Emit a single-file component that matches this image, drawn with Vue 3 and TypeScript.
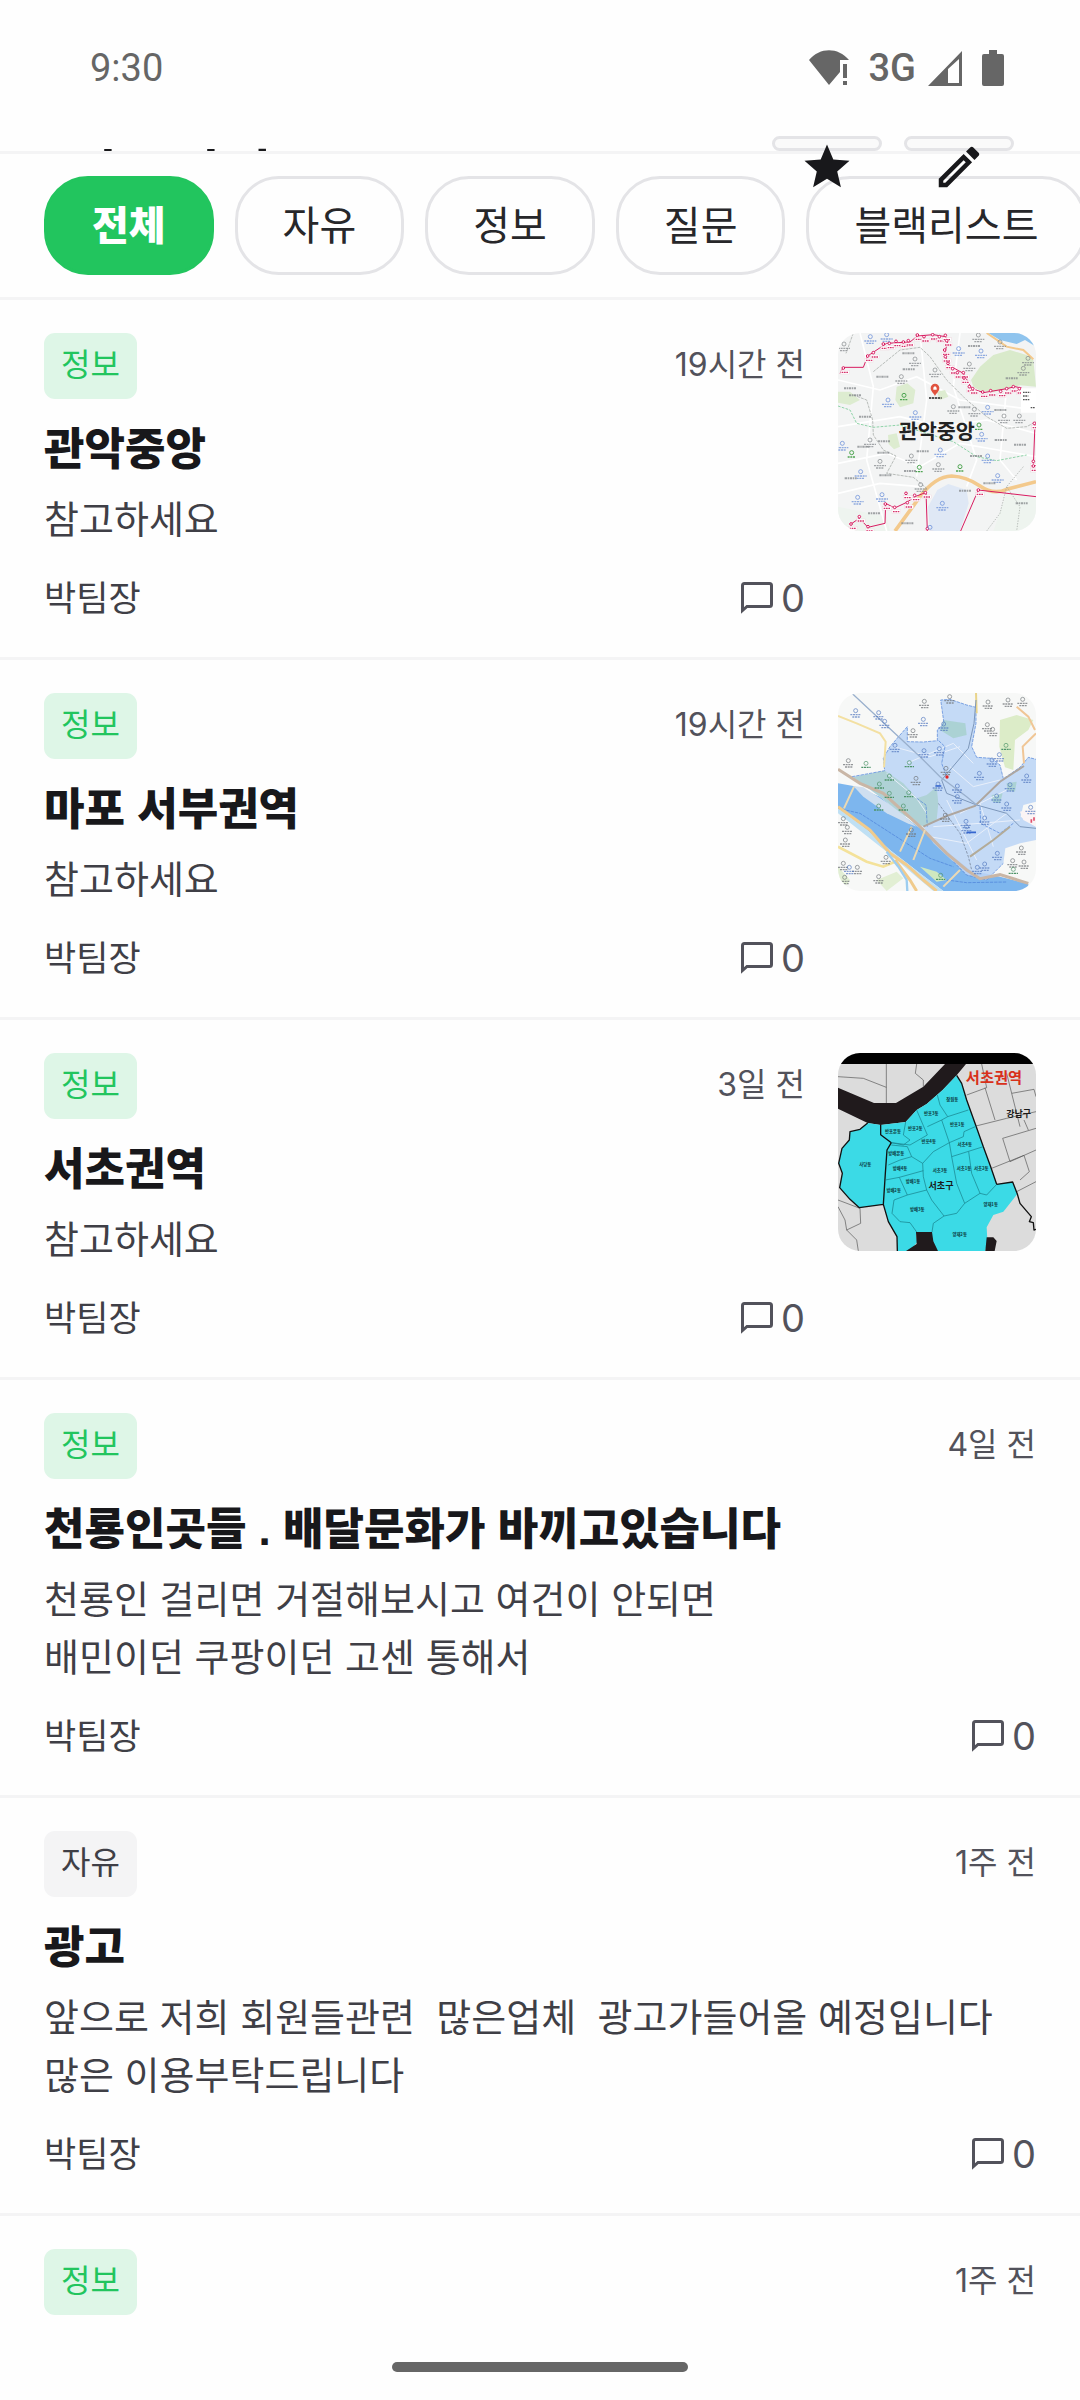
<script setup lang="ts">
import { ref } from 'vue'

interface Post {
  category: string
  time: string
  title?: string
  body?: string
  author?: string
  comments?: number
  map?: 'gwanak' | 'mapo' | 'seocho'
}

const categories: string[] = ['전체', '자유', '정보', '질문', '블랙리스트']
const selected = ref<string>('전체')

const posts: Post[] = [
  { category: '정보', time: '19시간 전', title: '관악중앙', body: '참고하세요', author: '박팀장', comments: 0, map: 'gwanak' },
  { category: '정보', time: '19시간 전', title: '마포 서부권역', body: '참고하세요', author: '박팀장', comments: 0, map: 'mapo' },
  { category: '정보', time: '3일 전', title: '서초권역', body: '참고하세요', author: '박팀장', comments: 0, map: 'seocho' },
  {
    category: '정보',
    time: '4일 전',
    title: '천룡인곳들 . 배달문화가 바끼고있습니다',
    body: '천룡인 걸리면 거절해보시고 여건이 안되면\n배민이던 쿠팡이던 고센 통해서',
    author: '박팀장',
    comments: 0,
  },
  {
    category: '자유',
    time: '1주 전',
    title: '광고',
    body: '앞으로 저희 회원들관련  많은업체  광고가들어올 예정입니다\n많은 이용부탁드립니다',
    author: '박팀장',
    comments: 0,
  },
  { category: '정보', time: '1주 전' },
]

type Point = [number, number]

// Points of interest on the maps: a small ring with a dash for its caption.
const gwanakGrey: Point[] = [
  [72, 72], [285, 117], [244, 170], [345, 150], [448, 132], [540, 66], [400, 260], [463, 268], [552, 288],
  [598, 288], [150, 360], [180, 424], [274, 408], [355, 434], [302, 494], [475, 45], [624, 115], [610, 145],
]
const gwanakBlue: Point[] = [
  [151, 50], [200, 44], [416, 86], [483, 93], [204, 240], [286, 278], [503, 262], [485, 343], [67, 370],
  [361, 390], [503, 408], [122, 455], [533, 467], [113, 532], [186, 524], [367, 550], [330, 622],
]
const gwanakGreen: Point[] = [[95, 398], [298, 442], [420, 440], [477, 315], [252, 226]]
const gwanakCaptions: Point[] = [
  [265, 100], [462, 78], [266, 148], [187, 170], [575, 175], [90, 205], [105, 226], [433, 262], [541, 270],
  [135, 290], [192, 364], [130, 380], [308, 394], [542, 360], [600, 374], [190, 398], [92, 475], [270, 453],
  [435, 512], [508, 490], [162, 580], [605, 550], [262, 610], [196, 466], [468, 408],
]
const markers: Point[] = [
  [70, 144], [143, 108], [160, 98], [190, 72], [208, 70], [228, 64], [250, 66], [265, 62], [292, 45], [312, 50],
  [338, 44], [358, 50], [376, 46], [380, 62], [374, 90], [376, 110], [384, 130], [398, 146], [412, 158],
  [430, 158], [432, 174], [448, 200], [458, 206], [488, 216], [512, 212], [542, 214], [560, 206], [580, 200],
  [598, 206], [196, 552], [224, 562], [262, 548], [258, 520], [284, 526], [316, 518], [118, 590], [93, 612],
  [144, 620], [322, 626], [475, 510], [643, 310], [640, 424], [640, 438],
]

const mapoGrey: Point[] = [
  [389, 50], [313, 64], [279, 152], [504, 66], [564, 60], [608, 58], [502, 134], [518, 148], [85, 242],
  [70, 416], [82, 442], [76, 480], [70, 550], [112, 562], [198, 532], [176, 590], [74, 592], [604, 504],
  [612, 546], [578, 542], [376, 405], [288, 295], [378, 265], [274, 450],
]
const mapoBlue: Point[] = [
  [107, 92], [176, 98], [310, 118], [194, 124], [371, 132], [225, 196], [312, 212], [358, 206], [478, 280],
  [530, 348], [570, 314], [620, 288], [560, 372], [632, 382], [412, 318], [412, 350], [438, 424], [494, 414],
  [532, 520], [494, 552], [516, 240], [538, 224], [354, 312], [472, 562], [88, 562], [440, 440],
]
const mapoGreen: Point[] = [[138, 250], [268, 248], [208, 288], [178, 312], [208, 340], [266, 338], [176, 378], [250, 378], [362, 586], [580, 568], [558, 196]]

const seochoNames: { x: number; y: number; name: string }[] = [
  { x: 397, y: 182, name: '잠원동' },
  { x: 334, y: 224, name: '반포3동' },
  { x: 219, y: 279, name: '반포본동' },
  { x: 286, y: 270, name: '반포2동' },
  { x: 412, y: 258, name: '반포1동' },
  { x: 326, y: 309, name: '반포4동' },
  { x: 434, y: 318, name: '서초4동' },
  { x: 229, y: 346, name: '방배본동' },
  { x: 240, y: 389, name: '방배4동' },
  { x: 360, y: 397, name: '서초3동' },
  { x: 432, y: 391, name: '서초1동' },
  { x: 484, y: 391, name: '서초2동' },
  { x: 279, y: 430, name: '방배1동' },
  { x: 221, y: 457, name: '방배2동' },
  { x: 292, y: 513, name: '방배3동' },
  { x: 512, y: 499, name: '양재1동' },
  { x: 419, y: 588, name: '양재2동' },
  { x: 136, y: 377, name: '사당동' },
]
</script>

<template>
  <div class="screen">
    <div class="status">
      <span class="clock">9:30</span>
      <div class="signals">
        <svg class="wifi" viewBox="0 0 40 36" aria-hidden="true">
          <path d="M0 10C11-3 29-3 40 10H31V22L20 35Z" />
          <path d="M34 14h4v14h-4zM34 31h4v4h-4z" />
        </svg>
        <span class="network">3G</span>
        <svg class="cell" viewBox="0 0 34 36" aria-hidden="true">
          <path fill-rule="evenodd" d="M0 36L34 1V36ZM20 19V33H31V9Z" />
        </svg>
        <svg class="battery" viewBox="0 0 22 36" aria-hidden="true">
          <path d="M7 0h8v4h5q2 0 2 2v28q0 2-2 2H2q-2 0-2-2V6q0-2 2-2h5z" />
        </svg>
      </div>
    </div>

    <header class="header">
      <div class="heading"><h1>커뮤니티</h1></div>
      <button class="action" type="button" aria-label="즐겨찾기">
        <svg viewBox="0 0 24 24" aria-hidden="true">
          <path d="M12 17.27L18.18 21l-1.64-7.03L22 9.24l-7.19-.61L12 2 9.19 8.63 2 9.24l5.46 4.73L5.82 21z" />
        </svg>
      </button>
      <button class="action" type="button" aria-label="글쓰기">
        <svg viewBox="0 0 24 24" aria-hidden="true">
          <path d="M14.06 9l.94.94L5.92 19H5v-.92L14.06 9M17.66 3c-.25 0-.51.1-.7.29l-1.83 1.83 3.75 3.75 1.83-1.83c.39-.39.39-1.04 0-1.41l-2.34-2.34c-.2-.2-.45-.29-.71-.29M14.06 6.19L3 17.25V21h3.75L17.81 9.94z" />
        </svg>
      </button>
    </header>

    <nav class="chips" aria-label="카테고리">
      <button
        v-for="name in categories"
        :key="name"
        type="button"
        class="chip"
        :class="{ active: name === selected }"
        @click="selected = name"
      >{{ name }}</button>
    </nav>

    <main class="list">
      <article v-for="(post, i) in posts" :key="i" class="post">
        <div class="content">
          <div class="meta">
            <span class="badge" :class="{ info: post.category === '정보' }">{{ post.category }}</span>
            <time class="time">{{ post.time }}</time>
          </div>
          <template v-if="post.title">
            <h2 class="title">{{ post.title }}</h2>
            <p class="body">{{ post.body }}</p>
            <div class="foot">
              <span class="author">{{ post.author }}</span>
              <span class="comments">
                <svg viewBox="0 0 32 32" aria-hidden="true">
                  <path d="M1.5 28.5V3.5q0-2 2-2h25q2 0 2 2v19q0 2-2 2H6z" />
                </svg>
                {{ post.comments }}
              </span>
            </div>
          </template>
        </div>

        <svg v-if="post.map === 'gwanak'" class="thumb" viewBox="54 39 594 594" role="img" aria-label="관악중앙 지도">
          <rect x="54" y="39" width="594" height="594" fill="#f3f4f4" />
          <path d="M520 633L560 520 648 535V633ZM54 560L200 590 210 633H54Z" fill="#eef4ef" />
          <g fill="none" stroke="#fff" stroke-width="5">
            <path d="M54 180L180 210 290 170 420 240 648 270M54 320L240 290 360 320 500 300 648 340M54 430L200 400 300 440 420 370 648 410M120 39L160 200 140 420 200 633M300 39L320 240 290 470M420 39L400 200 470 420 440 500M560 200L540 420 590 480M54 520L180 490 300 500" />
          </g>
          <path d="M505 39L540 60 590 72 615 60 648 80V39Z" fill="#8fc4ee" />
          <path d="M453 180L480 140 520 105 570 90 620 105 640 120 648 200 600 196 560 206 520 216 480 212 460 200Z" fill="#d9eacb" />
          <path d="M230 200L262 190 286 210 280 250 240 262 226 240ZM54 215L90 215 120 240 90 255 54 248ZM204 345L230 340 240 380 222 388 206 372ZM350 215L375 210 385 230 360 240Z" fill="#ddecd0" />
          <path d="M352 510L385 492 440 510 446 550 420 633H330L324 560Z" fill="#dfe8f5" />
          <path d="M225 633L300 530Q345 470 395 468Q440 470 480 498T560 508L648 485" fill="none" stroke="#f3c98c" stroke-width="11" />
          <path d="M500 39L560 80 610 90 640 118" fill="none" stroke="#f3c98c" stroke-width="6" />
          <g fill="none" stroke="#9aa09c" stroke-width="2">
            <path d="M100 39L78 100M160 155L240 90 300 82 330 110 380 180 440 240 500 290 560 325 620 320 648 305M100 225L140 240 158 300 160 345 190 390 228 408 200 460 280 472 320 505" stroke-dasharray="9 3" />
            <path d="M560 500L540 580 500 633M610 440L560 500 600 560 590 633" stroke-dasharray="4 4" />
          </g>
          <path d="M54 258L90 270 110 310 160 322 240 315 400 365 470 410 530 422 620 405" fill="none" stroke="#8fd3a8" stroke-width="3" stroke-dasharray="8 4" />
          <g fill="none" stroke="#d81b60" stroke-width="3">
            <path d="M60 160L70 142H130L143 108 200 70 270 66 292 48 340 44 376 50 384 62 374 100 385 135 430 160 455 205 490 218 560 206 585 200 605 204" />
            <path d="M645 310L640 440M93 612L118 595 144 622 195 610 197 550 224 564 258 548 290 528 316 518M318 515L322 633M648 530L475 510 422 633" />
          </g>
          <g v-for="([x, y], k) in markers" :key="'m' + k">
            <rect :x="x - 8" :y="y + 7" width="26" height="11" fill="#fff" stroke="#ecc9d5" />
            <path :d="`M${x - 5} ${y + 13}h20`" stroke="#d6336c" stroke-width="4" stroke-dasharray="5 2" />
            <circle :cx="x" :cy="y" r="4" fill="#fff" stroke="#d81b60" stroke-width="3" />
          </g>
          <g v-for="([x, y], k) in gwanakGrey" :key="'g' + k" stroke="#7f8387" stroke-width="2" fill="none">
            <circle :cx="x" :cy="y" r="6" />
            <path :d="`M${x - 18} ${y + 13}h36M${x - 12} ${y + 20}h24`" stroke-width="4" stroke-dasharray="6 2" opacity="0.7" />
          </g>
          <g v-for="([x, y], k) in gwanakBlue" :key="'b' + k" stroke="#5b84d6" stroke-width="2" fill="none">
            <circle :cx="x" :cy="y" r="6" />
            <path :d="`M${x - 18} ${y + 13}h36M${x - 12} ${y + 20}h24`" stroke-width="4" stroke-dasharray="6 2" opacity="0.65" />
          </g>
          <g v-for="([x, y], k) in gwanakGreen" :key="'n' + k" stroke="#4fa552" stroke-width="3" fill="none">
            <circle :cx="x" :cy="y" r="6" />
            <path :d="`M${x - 12} ${y + 13}h24`" stroke-width="4" stroke-dasharray="6 2" />
          </g>
          <path
            v-for="([x, y], k) in gwanakCaptions"
            :key="'c' + k"
            :d="`M${x - 18} ${y}h36`"
            stroke="#85898c"
            stroke-width="6"
            stroke-dasharray="7 2 4 2"
            opacity="0.75"
          />
          <path d="M603 205H648V278H603Z" fill="#fff" />
          <path d="M609 217h22M609 228h16M609 239h20M632 263h14" stroke="#555" stroke-width="4" stroke-dasharray="5 2" />
          <path d="M345 228C340 218 332 214 332 204A13 13 0 0 1 358 204C358 214 350 218 345 228Z" fill="#e0533f" />
          <path d="M340 209v-6l5-5 5 5v6z" fill="#fff" />
          <path d="M327 234h38" stroke="#222" stroke-width="5" stroke-dasharray="7 2" />
          <text x="350" y="357" class="map-main">관악중앙</text>
        </svg>

        <svg v-else-if="post.map === 'mapo'" class="thumb" viewBox="54 39 594 594" role="img" aria-label="마포 서부권역 지도">
          <rect x="54" y="39" width="594" height="594" fill="#f7f8f7" />
          <path d="M540 120L590 105 640 120 625 150 585 180 580 270 555 262 538 200Z" fill="#dcecc8" />
          <path d="M170 600L230 575 250 595 200 633ZM54 560L90 600 80 615 54 600Z" fill="#e2efd4" />
          <path d="M54 310L100 318 180 350 240 400 320 460 400 530 450 570 540 590 625 612V633H370L300 580 210 510 130 440 54 385Z" fill="#7db6ee" />
          <path d="M54 385L130 440 210 510 300 580 370 633H340L200 515 54 400Z" fill="#bfe0f4" />
          <path d="M100 318L130 322 220 380 290 440 262 430 200 400 130 350Z" fill="#cfdff0" />
          <path d="M300 560L350 575 380 600 350 605Z" fill="#cfe8bf" />
          <path d="M194 272L190 235 210 200 240 165 262 140 262 185 310 186 352 182 352 150 372 130 362 60 390 58 440 75 468 82 468 130 455 200 470 232 515 235 540 255 550 296 600 262 625 232 648 238V365L610 375 602 410 648 440V480L600 490 556 505 550 550 520 580 500 600 440 585 400 545 340 490 310 440 250 405 180 350 96 290Z" fill="#bdd5f6" fill-opacity="0.88" />
          <path d="M194 272L250 310 290 355 320 345 350 320 355 370 350 420 310 440 250 405 180 350 100 292Z" fill="#abd0d0" fill-opacity="0.85" />
          <path d="M370 120L436 130 440 165 400 175 360 150ZM515 345L548 340 540 370 518 365ZM560 310L590 305 585 335 562 330Z" fill="#a5cfcc" fill-opacity="0.8" />
          <g fill="none" stroke="#e8effa" stroke-width="3">
            <path d="M200 280L290 355 320 400M220 200L330 230 420 200M260 250L400 190 460 250M340 440L480 430 600 420M380 360L470 540M420 400L560 330M330 470L440 490 560 400M480 370L520 500M390 260L460 320 540 300" />
          </g>
          <g fill="none" stroke="#4a7fd8" stroke-width="2" stroke-dasharray="10 3">
            <path d="M96 290L194 272 190 235 210 200 240 165 262 140 262 185 310 186 352 182 352 150 372 130 362 60 390 58 440 75 468 82 468 130 455 200 470 232 515 235 540 255 550 296 600 262 625 232 648 238M54 385L120 400 260 490 330 535 400 560M290 355L318 375 322 440M356 182L375 200 365 250 378 285M480 380L482 430 540 460 580 430M380 600L440 608 560 606M400 545L440 585 500 600 520 580 550 550" />
          </g>
          <g fill="none">
            <path d="M54 268L120 310 190 340 300 440 380 520 440 570 480 596 540 584 625 610" stroke="#c9b6a6" stroke-width="9" />
            <path d="M54 380L150 450 210 520 260 555 310 600 350 633M225 540L270 600 290 633" stroke="#f0cb8c" stroke-width="9" />
            <path d="M54 500L140 545 190 560 225 545" stroke="#f4e29a" stroke-width="8" />
            <path d="M200 515L235 560 260 600 262 633" stroke="#9dcdf0" stroke-width="7" />
            <path d="M54 108L110 130 180 160 197 185 192 262" stroke="#f3e0a2" stroke-width="6" />
            <path d="M468 39L470 100" stroke="#e9d48a" stroke-width="6" />
            <path d="M612 250L608 200 640 168 648 160M590 80L625 110 645 150" stroke="#f0c696" stroke-width="6" />
            <path d="M72 385L102 320M240 515L275 440M280 540L315 450M370 620L420 570" stroke="#ead9b4" stroke-width="6" />
            <path d="M310 440L380 408 465 378 540 305 612 258" stroke="#aea69f" stroke-width="6" />
            <path d="M450 530L520 480 570 440" stroke="#b3ab98" stroke-width="6" />
            <path d="M468 60L462 130 445 205 365 300 380 340 470 375 560 400 600 440 648 445" stroke="#7d97ba" stroke-width="3" />
            <path d="M95 39L230 165 300 230 360 290 440 350 470 375" stroke="#9ab0cd" stroke-width="4" />
            <path d="M355 370L420 460 445 530 455 570" stroke="#8796ad" stroke-width="3" stroke-dasharray="8 4" />
          </g>
          <path d="M600 395L640 385 648 400V440L610 420Z" fill="#fbf4f5" />
          <g v-for="([x, y], k) in mapoGrey" :key="'g' + k" stroke="#71757a" stroke-width="2" fill="none">
            <circle :cx="x" :cy="y" r="6" />
            <path :d="`M${x - 16} ${y + 12}h32M${x - 10} ${y + 19}h22`" stroke-width="4" stroke-dasharray="6 2" opacity="0.75" />
          </g>
          <g v-for="([x, y], k) in mapoBlue" :key="'b' + k" stroke="#5378bf" stroke-width="2" fill="none">
            <circle :cx="x" :cy="y" r="6" />
            <path :d="`M${x - 16} ${y + 12}h32M${x - 10} ${y + 19}h22`" stroke-width="4" stroke-dasharray="6 2" opacity="0.7" />
          </g>
          <g v-for="([x, y], k) in mapoGreen" :key="'n' + k" stroke="#4d9468" stroke-width="2" fill="none">
            <circle :cx="x" :cy="y" r="6" />
            <path :d="`M${x - 14} ${y + 12}h28`" stroke-width="4" stroke-dasharray="6 2" />
          </g>
          <circle cx="381" cy="291" r="5" fill="#e02424" />
          <path d="M346 318h18M440 457h28" stroke="#3566cf" stroke-width="5" />
          <path d="M634 418v10M642 412v10" stroke="#e0506e" stroke-width="5" />
        </svg>

        <svg v-else-if="post.map === 'seocho'" class="thumb" viewBox="54 39 594 594" role="img" aria-label="서초권역 지도">
          <rect x="54" y="39" width="594" height="594" fill="#dcdcdc" />
          <g fill="none" stroke="#555" stroke-width="2">
            <path d="M54 110L130 115 199 142M199 72V190M290 72L286 100 310 120 310 140M440 165L500 143 485 72M495 143L525 240M468 258L560 235M560 235L648 215M575 160L642 148 648 170M575 160L560 100M575 160L600 260M548 295L648 265M548 295L570 365M515 385L612 346 628 395 600 420M570 365L648 330M590 455L648 425M54 480L120 505 122 550 80 570M54 500L75 540 80 570 110 600 115 633M612 240L625 270" />
          </g>
          <path d="M54 143L162 189H228L310 140 375 72H438L410 106 368 150 320 192 290 210 257 246 182 255 143 249 54 206Z" fill="#201a1c" />
          <path d="M143 249L182 255 257 246 290 210 320 192 368 150 410 106 425 130 440 180 468 258 490 320 512 380 530 433 578 426 592 462 550 515 520 525 500 562 502 600 496 633H352L336 600V576H294L288 584 292 606 270 633H232L231 590 205 545 190 493 118 503 90 478 59 443 67 400 56 370 66 325 88 300 90 275 120 268Z" fill="#3bdae6" />
          <path d="M288 576H336L340 604 354 633H258L290 612ZM500 592H520L530 603 524 633H496Z" fill="#201a1c" />
          <g fill="none" stroke="#111" stroke-width="4" stroke-linejoin="round">
            <path d="M410 106L425 130 440 180 468 258 490 320 512 380 530 433 578 426 592 462 600 490 634 530 628 545 640 548 642 570 648 568" />
            <path d="M182 255V284L214 308 201 330 196 400 190 493 205 545 231 590 232 633M190 493L118 503 90 478 59 443 67 400 56 370 66 325 88 300 90 275 120 268 143 249" />
          </g>
          <g fill="none" stroke="#177b87" stroke-width="2">
            <path d="M214 308L250 315 270 300 250 285 257 246M290 210L322 285 270 315 214 308M352 165L360 195 383 230 445 210M322 260L365 240 388 308M365 240L383 230M388 308L430 290 432 275 470 258M388 308L395 350 410 430 434 490M388 308L340 335 308 370 310 410 320 450 335 480 372 528M395 350L490 320M446 335L455 400 480 460M214 315L262 320 275 350 308 370M205 375L240 360 275 350M196 420L238 412 310 392M238 412L262 465 320 450M262 465L222 480 216 520 240 545 270 548 290 576M372 528L410 520 434 490 480 460 500 465 530 433M372 528L340 550 336 576" />
          </g>
          <rect x="54" y="39" width="594" height="33" fill="#000" />
          <text v-for="n in seochoNames" :key="n.name" :x="n.x" :y="n.y" class="map-name">{{ n.name }}</text>
          <text x="522" y="129" class="map-area">서초권역</text>
          <text x="596" y="231" class="map-gu">강남구</text>
          <text x="363" y="446" class="map-gu">서초구</text>
        </svg>
      </article>
    </main>

    <div class="home"><span></span></div>
  </div>
</template>

<style>
body {
  margin: 0;
  background: #fefefe;
}
</style>

<style scoped>
.screen {
  display: flex;
  flex-direction: column;
  height: 100vh;
  overflow: hidden;
  font-family: Inter, 'Noto Sans CJK KR', sans-serif;
  color: #18181b;
}

button {
  margin: 0;
  font: inherit;
  color: inherit;
  cursor: pointer;
}

.status {
  display: flex;
  flex: none;
  justify-content: space-between;
  align-items: center;
  height: 136px;
  padding: 0 76px 0 90px;
  box-sizing: border-box;
  font-family: Roboto, sans-serif;
  font-size: 38px;
  color: #666;
}

.signals {
  display: flex;
  align-items: center;
  fill: #666;
}

.wifi {
  width: 40px;
  height: 36px;
}

.network {
  margin: 0 12px 0 20px;
  font-weight: 500;
}

.cell {
  width: 34px;
  height: 36px;
  margin-right: 20px;
}

.battery {
  width: 22px;
  height: 36px;
}

.header {
  display: flex;
  position: relative;
  z-index: 1;
  flex: none;
  gap: 22px;
  height: 15px;
  padding: 0 66px;
  border-bottom: 3px solid #f4f4f5;
}

.heading {
  flex: 1;
  height: 15px;
  overflow: hidden;
}

h1 {
  margin: 0;
  font-size: 56px;
  font-weight: 700;
  line-height: 80px;
}

.action {
  display: flex;
  justify-content: center;
  align-items: flex-start;
  width: 110px;
  height: 15px;
  padding: 1px 0;
  box-sizing: border-box;
  border: 3px solid #e4e4e7;
  border-radius: 8px;
  background: #fafafa;
}

.action svg {
  flex: none;
  width: 54px;
  height: 54px;
  fill: #18181b;
}

.chips {
  display: flex;
  flex: none;
  gap: 21px;
  padding: 22px 44px;
  border-bottom: 3px solid #f4f4f5;
  overflow: hidden;
}

.chip {
  flex: none;
  height: 99px;
  padding: 0 45px;
  border: 3px solid #e4e4e7;
  border-radius: 44px;
  background: #fefefe;
  font-size: 40px;
  line-height: 60px;
  color: #27272a;
}

.chip.active {
  border-color: #22c55e;
  background: #22c55e;
  font-weight: 900;
  color: #fff;
}

.list {
  flex: 1;
  min-height: 0;
  overflow: hidden;
}

.post {
  display: flex;
  align-items: flex-start;
  gap: 33px;
  padding: 33px 44px;
  border-bottom: 3px solid #f4f4f5;
}

.post:last-child {
  border-bottom: 0;
}

.content {
  flex: 1;
  min-width: 0;
}

.meta,
.foot {
  display: flex;
  justify-content: space-between;
}

.badge {
  height: 66px;
  padding: 0 17px;
  border-radius: 11px;
  background: #f4f4f5;
  font-size: 32px;
  line-height: 64px;
  color: #3f3f46;
}

.badge.info {
  background: #def6e7;
  color: #22c55e;
}

.time {
  font-size: 32px;
  line-height: 64px;
  color: #52525b;
}

.title {
  margin: 24px 0 13px;
  font-family: 'Liberation Sans', 'Noto Sans CJK KR', sans-serif;
  font-size: 44px;
  font-weight: 900;
  line-height: 54px;
}

.body {
  margin: 0 0 24px;
  font-size: 38px;
  line-height: 58px;
  color: #3f3f46;
  white-space: pre-wrap;
}

.foot {
  align-items: center;
  height: 52px;
  font-size: 35px;
  line-height: 52px;
  color: #3f3f46;
}

.comments {
  display: flex;
  align-items: center;
  gap: 8px;
  font-size: 38px;
  color: #52525b;
}

.comments svg {
  width: 32px;
  height: 32px;
  fill: none;
  stroke: #52525b;
  stroke-width: 3;
}

.thumb {
  flex: none;
  width: 198px;
  height: 198px;
  border-radius: 22px;
}

.thumb text {
  text-anchor: middle;
  font-family: 'Noto Sans CJK KR', sans-serif;
}

.map-main {
  font-size: 62px;
  font-weight: 700;
  fill: #222;
}

.map-name {
  font-size: 13px;
  font-weight: 700;
  fill: #0c3b42;
}

.map-area {
  font-size: 46px;
  font-weight: 700;
  fill: #d8301a;
}

.map-gu {
  font-size: 27px;
  font-weight: 700;
  fill: #1a1a1a;
}

.home {
  display: flex;
  flex: none;
  justify-content: center;
  align-items: center;
  height: 66px;
}

.home span {
  width: 296px;
  height: 10px;
  border-radius: 5px;
  background: #666;
}
</style>
